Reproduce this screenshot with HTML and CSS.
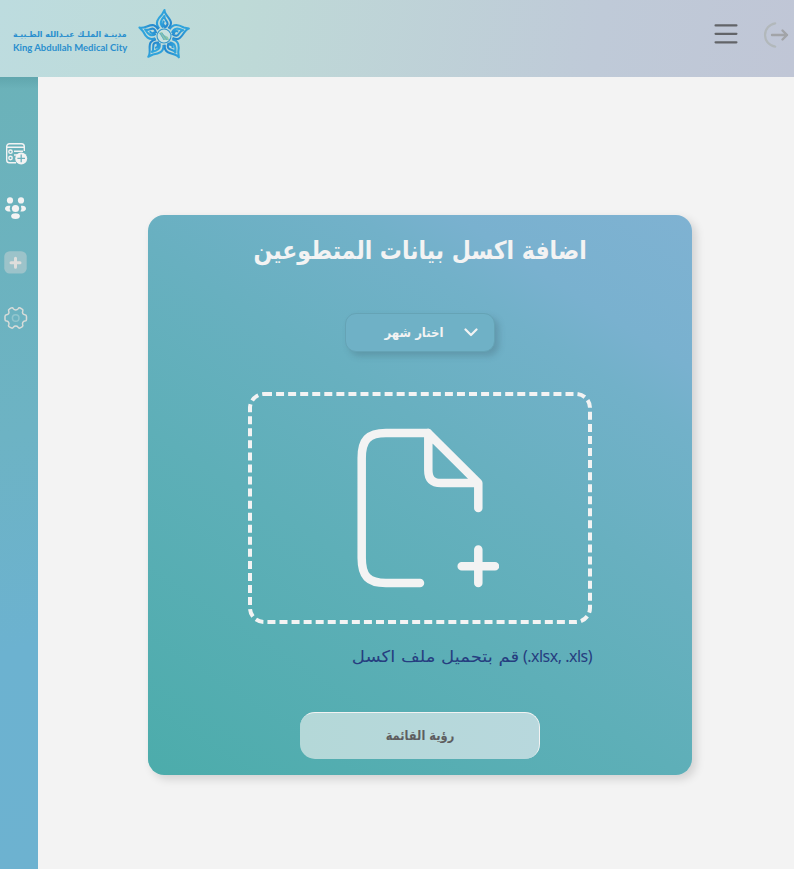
FILE: index.html
```html
<!DOCTYPE html>
<html lang="ar">
<head>
<meta charset="utf-8">
<title>King Abdullah Medical City</title>
<link rel="stylesheet" href="styles.css">
</head>
<body>
<header class="header">
  <div class="brand">
    <div class="brand-text">
      <span class="brand-ar" dir="rtl"><span class="fit">مدينـة الملـك عبـدالله الطـبيـة</span></span>
      <span class="brand-en"><span class="fit">King Abdullah Medical City</span></span>
    </div>
    <svg class="logo" viewBox="0 0 54 52">
      <defs>
        <linearGradient id="petal-fill" x1="0" y1="0" x2="1" y2="1"><stop offset="0" stop-color="#35b0e2"/><stop offset="1" stop-color="#2383cb"/></linearGradient>
        <g id="petal" fill="none" stroke="url(#petal-fill)" stroke-width="2.1" stroke-linejoin="round">
          <path d="M-4.800-7.500C-9.500-13-6-17.500-2-21.500L.5-26C.3-21 7-17.500 7-13C7-10 5.500-8.700 4.500-7.500"/>
          <path d="M-.5-8.500C-5-12-3.400-15.500.4-20C-.2-16 4-15 3.600-12C3.400-10.200 1.500-9 .2-8.200M.1-15C-2-12.500-.8-11 1-10"/>
        </g>
      </defs>
      <g transform="translate(27 28)">
        <use href="#petal"/><use href="#petal" transform="rotate(72)"/><use href="#petal" transform="rotate(144)"/><use href="#petal" transform="rotate(216)"/><use href="#petal" transform="rotate(288)"/>
        <circle r="7" fill="#c7e1df" stroke="#3598cb" stroke-width="1.1"/>
        <path d="M-5-3L-2-4L0-1L4 1L5 4L0 4Z" fill="#8cc6a8"/>
        <path d="M-4-3L0 4M-2-3L3 4" stroke="#5fb0c8" stroke-width="1"/>
      </g>
    </svg>
  </div>
  <div class="actions">
    <svg class="menu" viewBox="0 0 24 20"><path d="M1.6 1.4H22.4M1.6 9.8H22.4M1.6 18.3H22.4"/></svg>
    <svg class="logout" viewBox="0 0 28 28"><path d="M14.2 2.4A11.7 11.7 0 0 0 14.2 25.6" class="arc"/><path d="M11 14H26M21.500 9.500L26 14L21.500 18.500" class="arrow"/></svg>
  </div>
</header>
<div class="layout">
  <nav class="sidebar">
    <svg viewBox="0 0 24 24"><g fill="none" stroke="#f3f3f3" stroke-width="1.4"><path d="M12 20.7H5.500a2.800 2.800 0 0 1-2.800-2.800V4.500A2.800 2.800 0 0 1 5.500 1.700h12a2.800 2.800 0 0 1 2.800 2.800V9M3 5.200H20M10 9.200H19M10 13H14"/><circle cx="6.500" cy="9.700" r="1.700"/><circle cx="6.500" cy="16" r="1.700"/></g><circle cx="17.200" cy="16.400" r="6" fill="#f3f3f3"/><path d="M17.200 12.600V20.200M13.400 16.400H21" stroke="#6db2be" stroke-width="1.300"/></svg>
    <svg viewBox="0 0 24 24" fill="#f3f3f3"><circle cx="6" cy="3.400" r="3.100"/><circle cx="17" cy="3.400" r="3.100"/><circle cx="11.500" cy="11.500" r="3.600"/><ellipse cx="11.500" cy="19.100" rx="4.400" ry="2.900"/><path d="M6.300 8.700H4.500C2.600 8.700 1 10 1 11.600S2.600 14.500 4.500 14.500H6.700A6.300 6.300 0 0 1 6.300 8.700ZM16.900 8.700H18.600C20.500 8.700 22 10 22 11.600S20.500 14.500 18.600 14.500H16.400A6.300 6.300 0 0 0 16.900 8.700Z"/></svg>
    <svg viewBox="0 0 24 24"><rect x=".3" y=".2" width="22.400" height="22.400" rx="5.400" fill="#d8d8d8" opacity=".45"/><path d="M11.500 7.200V16.200M7 11.700H16" stroke="#dededc" stroke-width="3" stroke-linecap="round"/></svg>
    <svg viewBox="0 0 24 24" fill="none" stroke-width="1.5"><path stroke="#d8dcd9" stroke-linejoin="round" d="M7.300 1.900C8.400 1.500 9.100 2.100 9.500 2.800C10.500 4.300 13 4.300 14 2.800C14.500 2 15.200 1.500 16.200 2L18.100 3.100C19 3.600 19.100 4.600 18.700 5.400C18 7.100 19 8.700 20.900 8.800C22 8.900 22.500 9.600 22.500 10.500V13.400C22.500 14.400 21.900 15 20.900 15.100C19 15.300 18 16.900 18.700 18.600C19.100 19.500 19 20.300 18.100 20.800L16.200 21.900C15.200 22.400 14.500 21.900 14 21.100C13 19.600 10.500 19.600 9.500 21.100C9 21.900 8.200 22.400 7.300 21.900L5.300 20.800C4.400 20.300 4.300 19.500 4.800 18.600C5.400 16.900 4.500 15.300 2.600 15.100C1.600 15 1 14.400 1 13.400V10.500C1 9.600 1.600 8.900 2.600 8.800C4.500 8.700 5.400 7.100 4.800 5.400C4.400 4.600 4.400 3.600 5.300 3.100Z"/><circle cx="11.700" cy="12" r="3.300" stroke="#91c6ce"/></svg>
  </nav>
  <main class="main">
    <section class="card" dir="rtl">
      <h1 class="title"><span class="fit">اضافة اكسل بيانات المتطوعين</span></h1>
      <button class="select">
        <svg viewBox="0 0 14 9"><path d="M1.500 1.500L7 7L12.500 1.500"/></svg>
        <span class="select-label"><span class="fit">اختار شهر</span></span>
      </button>
      <div class="drop">
        <svg class="dash" viewBox="0 0 344 232"><rect x="2" y="2" width="340" height="228" rx="14"/></svg>
        <svg class="file" viewBox="0 0 142 160"><path d="M63 155H29C11 155 4.700 148 4.700 130V30C4.700 12 11 5 29 5H71L121.300 55V80M71.300 5V42C71.300 51 75.500 55 84 55H121M121.300 121.500V155M104.700 138.300H138"/></svg>
      </div>
      <p class="hint"><bdi dir="ltr">(.xlsx, .xls)</bdi><span class="fit">قم بتحميل ملف اكسل</span></p>
      <button class="view"><span class="fit">رؤية القائمة</span></button>
    </section>
  </main>
</div>
</body>
</html>
```
FILE: styles.css
```css
* { box-sizing: border-box; }
body {
  margin: 0;
  height: 869px;
  overflow: hidden;
  display: flex;
  flex-direction: column;
  background: #f3f3f3;
  font-family: "DejaVu Sans", sans-serif;
}
svg { display: block; flex: none; }
button { font: inherit; margin: 0; padding: 0; }
.fit { display: inline-block; white-space: nowrap; }

.header {
  height: 77px;
  flex: none;
  display: flex;
  justify-content: space-between;
  background: linear-gradient(100deg, #bddcdf 0%, #bedad7 30%, #bfcad8 75%, #c0c6d6 100%);
}
.brand { display: flex; padding: 8px 0 0 13px; gap: 10px; }
.brand-text {
  width: 114px;
  padding-top: 20px;
  color: #2a8fce;
  display: flex;
  flex-direction: column;
}
.brand-ar { height: 13px; line-height: 13px; font-size: 8px; font-weight: bold; }
.brand-en { height: 14px; font: bold 9px/14px Lato, sans-serif; }
.brand-ar .fit { transform: scaleX(.975); transform-origin: right; }
.brand-en .fit { transform: scaleX(1.055); transform-origin: left; }
.logo { width: 54px; height: 52px; }
.actions { display: flex; gap: 23px; padding: 21px 5px 0 0; }
.menu { width: 24px; height: 20px; margin-top: 3px; }
.menu path { stroke: #626468; stroke-width: 2.3; stroke-linecap: round; }
.logout { width: 28px; height: 28px; margin-top: -.5px; }
.logout path { fill: none; stroke-width: 2.2; stroke-linecap: round; stroke-linejoin: round; }
.logout .arc { stroke: #b2b8bb; }
.logout .arrow { stroke: #a2a4a8; stroke-width: 2.4; }

.layout { flex: 1; display: flex; }
.sidebar {
  width: 38px;
  display: flex;
  flex-direction: column;
  gap: 30.7px;
  padding: 65px 0 0 4px;
  background: linear-gradient(rgba(0, 60, 70, .1), rgba(0, 60, 70, 0) 12px), linear-gradient(165deg, #6bb2b9 0%, #6db3c4 45%, #6cb2d0 72%, #6db2d0 100%);
}
.sidebar svg { width: 24px; height: 24px; }
.main { flex: 1; padding: 138px 0 0 110px; }

.card {
  width: 544px;
  height: 560px;
  border-radius: 16px;
  padding-top: 16px;
  display: flex;
  flex-direction: column;
  align-items: center;
  background: linear-gradient(33deg, #4cacab 0%, #5eafb8 38%, #68b0c0 58%, #72b1c9 76%, #79b1cf 83%, #7fb2d2 100%);
  box-shadow: 4px 4px 10px rgba(0, 0, 0, .14);
}
.title {
  margin: 0;
  height: 38px;
  color: #f3f3f3;
  font-size: 25px;
  line-height: 38px;
}
.title .fit { transform: translateY(1px) scaleX(.881); }
.select {
  width: 150px;
  height: 39px;
  margin-top: 44px;
  padding-right: 16.5px;
  display: flex;
  align-items: center;
  gap: 20.5px;
  border: 1px solid #65a3b5;
  border-radius: 11px;
  background: #6fb1c6;
  box-shadow: 4px 4px 6px rgba(60, 90, 105, .28);
  color: #f3f3f3;
  font-size: 13px;
  font-weight: bold;
}
.select-label .fit { transform: scaleX(.9); transform-origin: right; }
.select svg { width: 14px; height: 9px; }
.select path { fill: none; stroke: #f3f3f3; stroke-width: 2.2; stroke-linecap: round; stroke-linejoin: round; }
.drop {
  width: 344px;
  height: 232px;
  margin-top: 40px;
  position: relative;
  padding: 36px 93px 0 0;
}
.dash { position: absolute; inset: 0; width: 344px; height: 232px; }
.dash rect { fill: none; stroke: #f3f3f3; stroke-width: 4; stroke-dasharray: 8 4.06; }
.file { width: 142px; height: 160px; }
.file path { fill: none; stroke: #f3f3f3; stroke-width: 8.5; stroke-linecap: round; stroke-linejoin: round; }
.hint {
  width: 344px;
  height: 28px;
  margin: 19px 0 0;
  display: flex;
  gap: 4px;
  color: #263e80;
  font-size: 16px;
  line-height: 27px;
}
.hint bdi { font-family: "Noto Sans", sans-serif; letter-spacing: -.5px; white-space: nowrap; }
.hint .fit { transform: scaleX(1.13); transform-origin: right; }
.view {
  width: 240px;
  height: 47px;
  margin-top: 41px;
  border: solid #f3f3f3;
  border-width: 1px 1px 0 0;
  border-radius: 15px;
  background: linear-gradient(90deg, #b4d8d8, #b8d8dd);
  color: #5e5e60;
  font-size: 13px;
  font-weight: bold;
}
.view .fit { transform: translateY(-1px) scaleX(.88); }
```
